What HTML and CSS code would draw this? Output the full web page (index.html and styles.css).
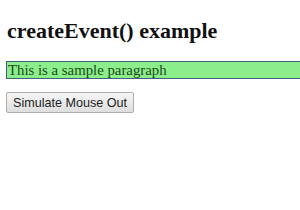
FILE: index.html
```html
<!DOCTYPE html>
<html>
<head>
<meta charset="utf-8">
<link rel="stylesheet" href="styles.css">
</head>
<body>
<h2 class="title">createEvent() example</h2>
<p class="sample">This is a sample paragraph</p>
<button class="btn">Simulate Mouse Out</button>
</body>
</html>
```
FILE: styles.css
```css
html, body { margin: 0; padding: 0; background: #fff; }
body {
  padding: 0 0 0 6px;
  font-family: "Liberation Serif", "Times New Roman", serif;
}
.title {
  font-size: 22px;
  font-weight: bold;
  margin: 0;
  padding: 18px 0 0 1px;
  line-height: 26px;
  color: #111;
}
.sample {
  margin: 17px 0 0 0;
  background: #8bee8b;
  border: 1px solid #3f5f7c;
  border-right: none;
  color: #1c4a1c;
  font-size: 14.8px;
  line-height: 16px;
  padding: 0 0 0 1px;
}
.btn {
  margin-top: 13px;
  font-family: "Liberation Sans", Arial, sans-serif;
  font-size: 12.6px;
  color: #222;
  background: linear-gradient(#f6f6f6, #dedede);
  border: 1px solid #adadad;
  border-radius: 2px;
  padding: 2px 6px;
  height: 21px;
}
```
